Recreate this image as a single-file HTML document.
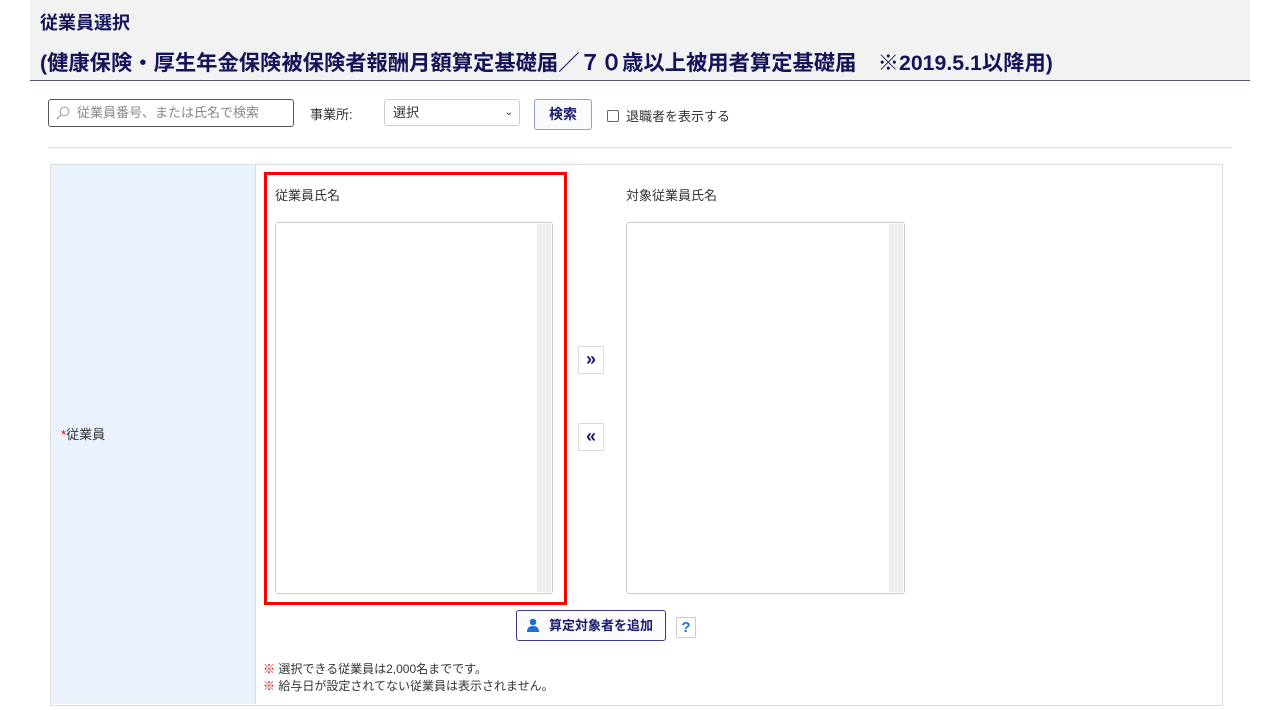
<!DOCTYPE html>
<html><head><meta charset="utf-8"><style>
body{margin:0;width:1288px;height:710px;background:#fff;font-family:"Liberation Sans","Noto Sans CJK JP",sans-serif;position:relative;overflow:hidden;color:#333}
.a{position:absolute}
.hdr{left:30px;top:0;width:1220px;height:80px;background:#f2f2f2;border-bottom:1px solid #5a5a8a}
.t{color:#14145a;font-weight:bold;font-size:18px;left:40px}
.lb{background:#fff;border:1px solid #ccc;border-radius:3px}
.sb{position:absolute;right:1px;top:1px;bottom:1px;width:14px;background:#f0f0f0}
.btn{border:1px solid #ddd;background:#fff;color:#1a1a6e;font-weight:bold;font-size:18px;text-align:center;line-height:24px}
</style></head><body>
<div class="a hdr"></div>
<div class="a t" style="top:9px">従業員選択</div>
<div class="a t" style="top:46px;font-size:21.3px;white-space:nowrap">(健康保険・厚生年金保険被保険者報酬月額算定基礎届／７０歳以上被用者算定基礎届　※2019.5.1以降用)</div>

<div class="a" style="left:48px;top:99px;width:244px;height:26px;border:1px solid #555;border-radius:3px;font-size:13px;color:#888;line-height:26px">
<svg width="14" height="14" style="position:absolute;left:7px;top:6px" viewBox="0 0 14 14"><circle cx="8.5" cy="5.5" r="4.3" fill="none" stroke="#aaa" stroke-width="1.2"/><line x1="5.5" y1="8.5" x2="1" y2="13" stroke="#aaa" stroke-width="1.5"/></svg>
<span style="margin-left:28px">従業員番号、または氏名で検索</span></div>
<div class="a" style="left:310px;top:104px;font-size:13px">事業所:</div>
<div class="a" style="left:384px;top:99px;width:134px;height:25px;border:1px solid #ccc;border-radius:3px;font-size:13px;line-height:25px"><span style="margin-left:8px">選択</span><span style="position:absolute;right:6px;top:0;font-size:10px">⌄</span></div>
<div class="a" style="left:534px;top:99px;width:56px;height:29px;border:1px solid #8ea0d8;border-radius:3px;background:#fafafa;color:#1a1a6e;font-weight:bold;font-size:14px;text-align:center;line-height:29px">検索</div>
<div class="a" style="left:607px;top:110px;width:10px;height:10px;border:1px solid #666;border-radius:2px"></div>
<div class="a" style="left:626px;top:106px;font-size:13px">退職者を表示する</div>
<div class="a" style="left:48px;top:147px;width:1184px;height:1px;background:#ddd"></div>

<div class="a" style="left:50px;top:164px;width:1171px;height:540px;border:1px solid #ddd"></div>
<div class="a" style="left:51px;top:165px;width:204px;height:539px;background:#eaf3fb;border-right:1px solid #ddd"></div>
<div class="a" style="left:61px;top:424px;font-size:13px"><span style="color:#e00">*</span>従業員</div>

<div class="a" style="left:275px;top:185px;font-size:13px">従業員氏名</div>
<div class="a lb" style="left:275px;top:222px;width:276px;height:370px"><div class="sb"></div></div>
<div class="a" style="left:264px;top:172px;width:297px;height:427px;border:3px solid #f00"></div>
<div class="a" style="left:626px;top:185px;font-size:13px">対象従業員氏名</div>
<div class="a lb" style="left:626px;top:222px;width:277px;height:370px"><div class="sb"></div></div>

<div class="a btn" style="left:578px;top:346px;width:24px;height:26px">»</div>
<div class="a btn" style="left:578px;top:423px;width:24px;height:26px">«</div>

<div class="a" style="left:516px;top:610px;width:148px;height:29px;border:1px solid #3a3a8a;border-radius:3px;background:#fbfbfd;font-size:13px;font-weight:bold;color:#1a1a6e;line-height:29px">
<svg width="14" height="14" style="position:absolute;left:9px;top:7px" viewBox="0 0 14 14"><circle cx="7" cy="4" r="3.3" fill="#1e6fd9"/><path d="M1 14 Q1 8 7 8 Q13 8 13 14Z" fill="#1e6fd9"/></svg>
<span style="margin-left:32px">算定対象者を追加</span></div>
<div class="a" style="left:676px;top:617px;width:18px;height:19px;border:1px solid #ccc;border-radius:2px;color:#1e6fd9;font-weight:bold;font-size:15px;text-align:center;line-height:19px">?</div>

<div class="a" style="left:263px;top:661px;font-size:12px;line-height:17px"><span style="color:#e00">※</span> 選択できる従業員は2,000名までです。<br><span style="color:#e00">※</span> 給与日が設定されてない従業員は表示されません。</div>
</body></html>
